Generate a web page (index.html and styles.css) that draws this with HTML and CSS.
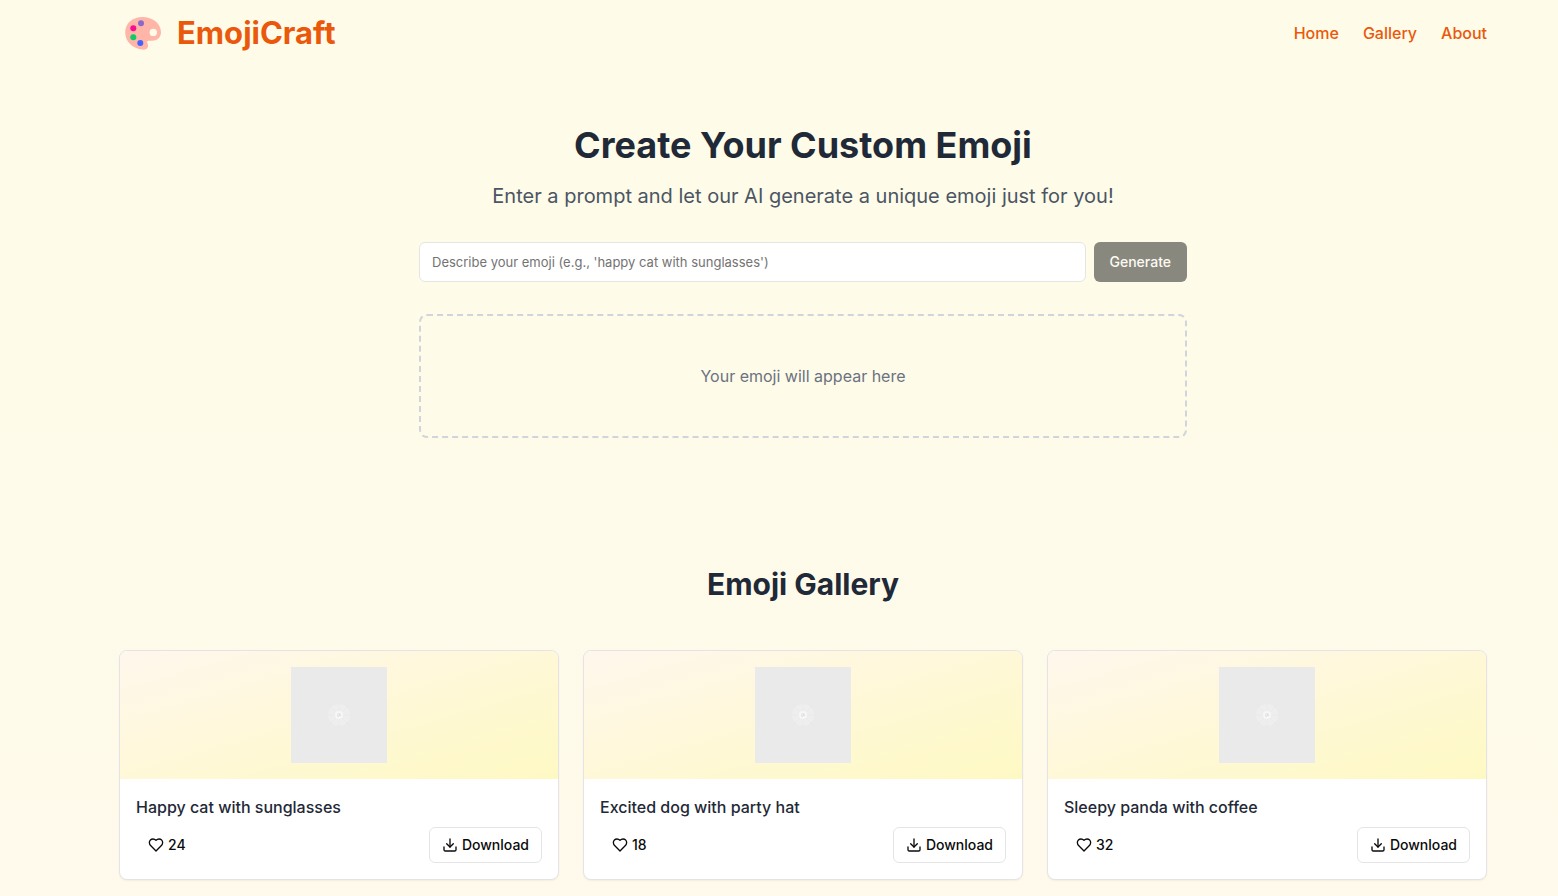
FILE: index.html
```html
<!DOCTYPE html>
<html lang="en">
<head>
<meta charset="utf-8">
<meta name="viewport" content="width=device-width, initial-scale=1">
<title>EmojiCraft</title>
<link rel="stylesheet" href="styles.css">
</head>
<body>
<svg class="sprite" aria-hidden="true">
  <symbol id="heart" viewBox="0 0 24 24"><path d="M19 14c1.49-1.46 3-3.21 3-5.5A5.5 5.5 0 0 0 16.5 3c-1.76 0-3 .5-4.5 2-1.5-1.5-2.74-2-4.5-2A5.5 5.5 0 0 0 2 8.500c0 2.300 1.500 4.050 3 5.500l7 7Z"/></symbol>
  <symbol id="download" viewBox="0 0 24 24"><path d="M21 15v4a2 2 0 0 1-2 2H5a2 2 0 0 1-2-2v-4"/><path d="m7 10 5 5 5-5"/><path d="M12 15V3"/></symbol>
  <symbol id="placeholder" viewBox="0 0 96 96">
    <path fill="#eaeaea" stroke="none" d="M0 0h96v96H0z"/>
    <circle cx="48" cy="48" r="11" fill="#eeeeee"/>
    <path stroke="#e7e7e7" stroke-width=".5" d="M36 36l24 24M60 36 36 60M48 34v28M34 48h28"/>
    <circle cx="48" cy="48" r="4" fill="#f7f7f7"/>
    <circle cx="48" cy="48" r="2" fill="#e2e2e2"/>
    <path fill="#f5f5f5" d="M47 47h1v1h-1zM48 49h1v1h-1z"/>
  </symbol>
</svg>
<header class="header">
  <a class="brand" href="#">
    <svg class="brand-icon" viewBox="0 0 36 34" aria-hidden="true">
      <path fill="#ffb5a8" fill-rule="evenodd" d="M17.500 1C27.500 1 36 7.500 36 16.300c0 5-4 8.500-9 8.500h-3.300c-1.400 0-2.100 1-1.400 2.100.8 1.300 1 2.600.6 4-.7 2.100-2.700 3-5.500 2.700C8 32.600.2 26 .2 16.500.2 7.300 7.500 1 17.500 1ZM28.300 12.700a3.700 3.700 0 1 0 0 7.400 3.700 3.700 0 0 0 0-7.400Z"/>
      <circle cx="16" cy="7.200" r="3" fill="#8b68cb"/>
      <circle cx="8.300" cy="12.200" r="3" fill="#f90b94"/>
      <circle cx="8.300" cy="21.200" r="3" fill="#0bcc68"/>
      <circle cx="15.300" cy="26.900" r="3" fill="#4162ff"/>
    </svg>
    <span>EmojiCraft</span>
  </a>
  <nav class="nav"><a href="#">Home</a><a href="#gallery">Gallery</a><a href="#about">About</a></nav>
</header>
<main>
  <section class="hero">
    <h1>Create Your Custom Emoji</h1>
    <p class="lead">Enter a prompt and let our AI generate a unique emoji just for you!</p>
    <form class="prompt">
      <input type="text" aria-label="Emoji description" placeholder="Describe your emoji (e.g., 'happy cat with sunglasses')">
      <button type="submit" disabled>Generate</button>
    </form>
    <div class="preview"><p>Your emoji will appear here</p></div>
  </section>
  <section class="gallery" id="gallery">
    <h2>Emoji Gallery</h2>
    <div class="cards">
      <article class="card">
        <div class="art"><svg><use href="#placeholder"/></svg></div>
        <div class="card-body">
          <h3>Happy cat with sunglasses</h3>
          <div class="actions">
            <button class="btn" type="button"><svg><use href="#heart"/></svg>24</button>
            <button class="btn outlined" type="button"><svg><use href="#download"/></svg>Download</button>
          </div>
        </div>
      </article>
      <article class="card">
        <div class="art"><svg><use href="#placeholder"/></svg></div>
        <div class="card-body">
          <h3>Excited dog with party hat</h3>
          <div class="actions">
            <button class="btn" type="button"><svg><use href="#heart"/></svg>18</button>
            <button class="btn outlined" type="button"><svg><use href="#download"/></svg>Download</button>
          </div>
        </div>
      </article>
      <article class="card">
        <div class="art"><svg><use href="#placeholder"/></svg></div>
        <div class="card-body">
          <h3>Sleepy panda with coffee</h3>
          <div class="actions">
            <button class="btn" type="button"><svg><use href="#heart"/></svg>32</button>
            <button class="btn outlined" type="button"><svg><use href="#download"/></svg>Download</button>
          </div>
        </div>
      </article>
    </div>
  </section>
</main>
</body>
</html>
```
FILE: styles.css
```css
*, *::before, *::after { box-sizing: border-box; }

body {
  margin: 0;
  min-height: 100vh;
  padding: 0 71px 16px 119px;
  background: linear-gradient(to bottom, #fefce8, #fff7ed 195%);
  color: #0a0a0a;
  font-family: Inter, "Liberation Sans", sans-serif;
  font-size: 16px;
  line-height: 24px;
}

h1, h2, h3, p { margin: 0; }
a { color: inherit; text-decoration: none; }
button, input { font: inherit; }
.sprite { display: none; }

.header {
  display: flex;
  align-items: center;
  justify-content: space-between;
  padding: 15px 0 16px;
  color: #ea580c;
}
.brand {
  display: flex;
  align-items: center;
  gap: 16px;
  padding-left: 6px;
  font-size: 31px;
  line-height: 36px;
  font-weight: 700;
}
.brand-icon { width: 36px; height: 34px; }
.nav { display: flex; gap: 24px; font-weight: 500; }

.hero {
  max-width: 768px;
  margin: 0 auto;
  padding: 58px 0 64px;
  text-align: center;
}
h1 {
  margin-bottom: 17px;
  color: #1f2937;
  font-size: 36px;
  line-height: 40px;
  font-weight: 700;
}
.lead {
  margin-bottom: 32px;
  color: #4b5563;
  font-size: 20px;
  line-height: 28px;
}
.prompt { display: flex; gap: 8px; margin-bottom: 32px; }
.prompt input {
  flex: 1;
  min-width: 0;
  height: 40px;
  padding: 8px 12px;
  border: 1px solid #e5e5e5;
  border-radius: 6px;
  background: #fff;
  font-size: 13px;
}
.prompt input::placeholder { color: #737373; opacity: 1; }
.prompt button {
  height: 40px;
  padding: 8px 16px;
  border: 0;
  border-radius: 6px;
  background: #171717;
  color: #fafafa;
  font-size: 14px;
  font-weight: 500;
  opacity: .5;
}
.preview {
  padding: 48px 16px;
  border: 2px dashed #d1d5db;
  border-radius: 8px;
  color: #6b7280;
}

.gallery { padding-top: 64px; }
h2 {
  margin-bottom: 48px;
  color: #1f2937;
  font-size: 30px;
  line-height: 36px;
  font-weight: 700;
  text-align: center;
}
.cards {
  display: grid;
  grid-template-columns: repeat(3, minmax(0, 1fr));
  gap: 24px;
}
.card {
  overflow: hidden;
  border: 1px solid #e4e4e7;
  border-radius: 8px;
  background: #fff;
  box-shadow: 0 1px 2px rgb(0 0 0 / 5%);
}
.art {
  display: flex;
  justify-content: center;
  padding: 16px;
  background: linear-gradient(to bottom right, #fff7ed, #fef9c3);
}
.art svg { width: 96px; height: 96px; }
.card-body { padding: 16px; }
h3 {
  margin-bottom: 8px;
  color: #1f2937;
  font-size: 16px;
  line-height: 24px;
  font-weight: 500;
}
.actions { display: flex; align-items: center; justify-content: space-between; }
.btn {
  display: flex;
  align-items: center;
  gap: 4px;
  height: 36px;
  padding: 0 12px;
  border: 0;
  border-radius: 6px;
  background: transparent;
  color: #0a0a0a;
  font-size: 14px;
  font-weight: 500;
}
.btn svg {
  width: 16px;
  height: 16px;
  fill: none;
  stroke: currentColor;
  stroke-width: 2;
  stroke-linecap: round;
  stroke-linejoin: round;
}
.outlined { border: 1px solid #e5e5e5; }
```
